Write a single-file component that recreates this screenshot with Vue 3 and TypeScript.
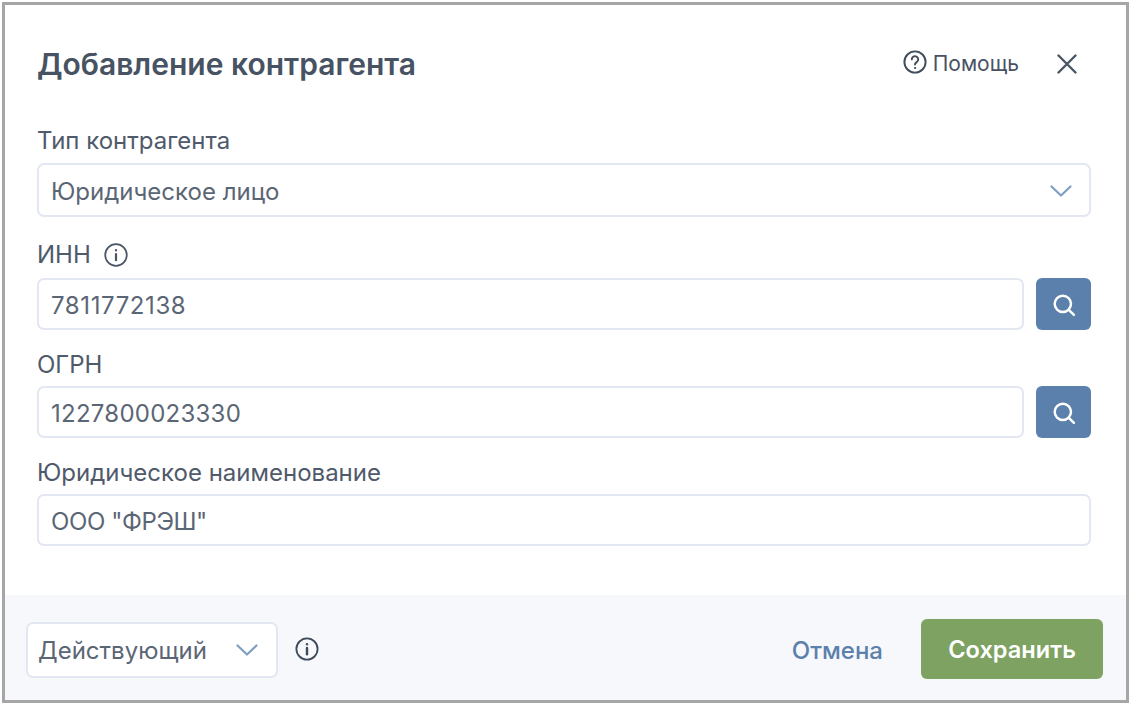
<script setup lang="ts">
const searchPath = 'M11 4a7 7 0 1 0 0 14 7 7 0 0 0 0-14Zm5.1 12.1 4.4 4.4'
</script>

<template>
  <div class="frame">
    <div class="body">
      <header class="head">
        <h1 class="title">Добавление контрагента</h1>
        <div class="help">
          <svg class="help-ic" viewBox="0 0 24 24" fill="none" stroke="#3f4a5a" stroke-width="1.9" stroke-linecap="round">
            <circle cx="12" cy="12" r="10.6" />
            <path d="M8.8 9.4a3.2 3.2 0 1 1 4.9 2.7c-1 .7-1.7 1.2-1.7 2.5" />
            <circle cx="12" cy="18" r=".6" fill="#3f4a5a" stroke-width="1" />
          </svg>
          <span class="help-text">Помощь</span>
        </div>
        <svg class="close" viewBox="0 0 20 20" fill="none" stroke="#4a5568" stroke-width="2.4" stroke-linecap="round">
          <path d="M1.5 1.5l17 17M18.5 1.5l-17 17" />
        </svg>
      </header>

      <label class="label first">Тип контрагента</label>
      <div class="field select">
        <span>Юридическое лицо</span>
        <svg class="chev" viewBox="0 0 22 12" fill="none" stroke="#7f9fc0" stroke-width="2.2" stroke-linecap="round" stroke-linejoin="round">
          <path d="M1.5 1.5 11 10.5l9.5-9" />
        </svg>
      </div>

      <label class="label inn">
        ИНН
        <svg class="info" viewBox="0 0 24 24" fill="none" stroke="#4a5568" stroke-width="1.7" stroke-linecap="round">
          <circle cx="12" cy="12" r="10.8" />
          <path d="M12 11v6.2" stroke-width="2.2" />
          <circle cx="12" cy="7.2" r=".5" fill="#4a5568" stroke-width="1.4" />
        </svg>
      </label>
      <div class="row">
        <div class="field grow num-a">7811772138</div>
        <button class="search" type="button" aria-label="Поиск">
          <svg viewBox="0 0 24 24" fill="none" stroke="#fff" stroke-width="2.1" stroke-linecap="round"><path :d="searchPath" /></svg>
        </button>
      </div>

      <label class="label ogrn">ОГРН</label>
      <div class="row">
        <div class="field grow num-b">1227800023330</div>
        <button class="search" type="button" aria-label="Поиск">
          <svg viewBox="0 0 24 24" fill="none" stroke="#fff" stroke-width="2.1" stroke-linecap="round"><path :d="searchPath" /></svg>
        </button>
      </div>

      <label class="label ogrn">Юридическое наименование</label>
      <div class="field name">ООО "ФРЭШ"</div>
    </div>

    <footer class="foot">
      <div class="status">
        <span>Действующий</span>
        <svg class="chev" viewBox="0 0 22 12" fill="none" stroke="#7f9fc0" stroke-width="2.2" stroke-linecap="round" stroke-linejoin="round">
          <path d="M1.5 1.5 11 10.5l9.5-9" />
        </svg>
      </div>
      <svg class="info foot-info" viewBox="0 0 24 24" fill="none" stroke="#3f4a5a" stroke-width="1.8" stroke-linecap="round">
        <circle cx="12" cy="12" r="10.6" />
        <path d="M12 11v6.2" stroke-width="2.4" />
        <circle cx="12" cy="7.2" r=".5" fill="#3f4a5a" stroke-width="1.6" />
      </svg>
      <span class="cancel">Отмена</span>
      <button class="save" type="button">Сохранить</button>
    </footer>
  </div>
</template>

<style scoped>
.frame {
  box-sizing: border-box;
  width: 1127px;
  height: 701px;
  margin: 2px 0 0 2px;
  border: 3px solid #a6a6a6;
  background: #fff;
  display: flex;
  flex-direction: column;
  font-family: Inter, "Noto Sans", sans-serif;
  color: #4d5869;
  overflow: hidden;
}
.body {
  flex: 1;
  padding: 0 35px 0 33px;
  display: flex;
  flex-direction: column;
}
.head {
  display: flex;
  height: 119px;
  align-items: center;
  box-sizing: border-box;
}
.title {
  margin: 0 0 2px -1px;
  flex: 1;
  font-size: 30px;
  line-height: 36px;
  font-weight: 600;
  color: #475263;
}
.help {
  display: flex;
  align-items: center;
  gap: 6px;
  font-size: 21px;
  line-height: 24px;
  color: #475263;
  margin-bottom: 5px;
}
.help-text {
  padding-top: 4px;
}
.help-ic {
  width: 24px;
  height: 24px;
}
.close {
  width: 20px;
  height: 20px;
  margin: 0 14px 1px 38px;
}
.label {
  box-sizing: border-box;
  display: flex;
  align-items: center;
  height: 30px;
  padding-top: 2px;
  font-size: 24px;
  line-height: 28px;
  color: #4f5a6b;
  margin-left: -1px;
}
.first {
  height: 31px;
  margin-bottom: 8px;
}
.inn {
  margin-top: 23px;
  margin-bottom: 8px;
  padding-top: 0;
  gap: 13px;
}
.ogrn {
  margin-top: 19px;
  margin-bottom: 7px;
}
.field {
  box-sizing: border-box;
  height: 52px;
  border: 2px solid #e3e7f1;
  border-radius: 7px;
  background: #fff;
  padding: 2px 11px 0 12px;
  display: flex;
  align-items: center;
  font-size: 24px;
  color: #5b6675;
  margin-left: -1px;
}
.select {
  height: 54px;
  justify-content: space-between;
  padding-right: 17px;
}
.num-a {
  letter-spacing: 0.6px;
}
.num-b {
  letter-spacing: 0.25px;
}
.name {
  letter-spacing: -0.4px;
}
.chev {
  width: 22px;
  height: 12px;
  flex: none;
}
.row {
  display: flex;
  gap: 12px;
}
.grow {
  flex: 1;
}
.search {
  width: 55px;
  height: 52px;
  border: 0;
  border-radius: 6px;
  background: #5b80ac;
  padding: 0;
  display: flex;
  align-items: center;
  justify-content: center;
}
.search svg {
  width: 28px;
  height: 28px;
  margin-top: 2px;
}
.info {
  width: 24px;
  height: 24px;
  flex: none;
}
.foot {
  height: 105px;
  flex: none;
  background: #f6f8fb;
  display: flex;
  align-items: center;
  padding: 0 23px 0 21px;
  box-sizing: border-box;
}
.status {
  box-sizing: border-box;
  width: 252px;
  height: 56px;
  border: 2px solid #e3e7f1;
  border-radius: 7px;
  background: #fff;
  display: flex;
  align-items: center;
  justify-content: space-between;
  padding: 0 18px 0 10px;
  font-size: 24px;
  color: #5b6675;
  margin-top: 5px;
}
.foot-info {
  margin-left: 17px;
  margin-top: 3px;
}
.cancel {
  margin-left: auto;
  margin-right: 38px;
  font-size: 24px;
  font-weight: 500;
  color: #5b80ac;
  margin-top: 5px;
}
.save {
  box-sizing: border-box;
  width: 182px;
  height: 60px;
  border: 0;
  border-radius: 6px;
  background: #7da262;
  color: #fff;
  font-family: inherit;
  font-size: 23.6px;
  font-weight: 600;
  padding: 0;
  margin-top: 3px;
}
</style>

<style>
html, body {
  margin: 0;
  background: #fff;
}
</style>
